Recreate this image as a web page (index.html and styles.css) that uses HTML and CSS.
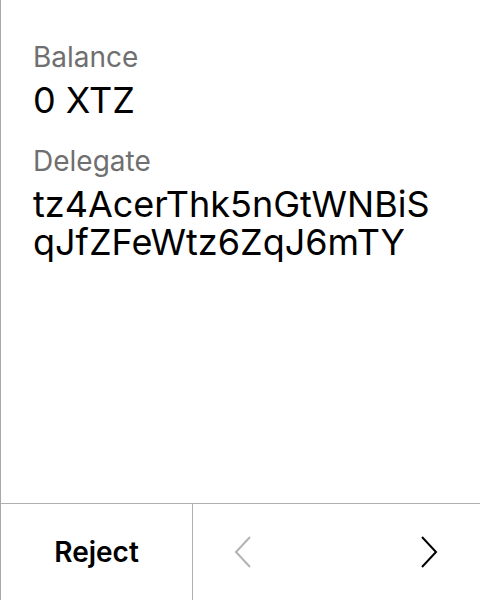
FILE: index.html
```html
<!DOCTYPE html>
<html>
<head>
<meta charset="utf-8">
<link rel="stylesheet" href="styles.css">
</head>
<body>
<div class="screen">
  <div class="content">
    <div class="field">
      <div class="label">Balance</div>
      <div class="value">0 XTZ</div>
    </div>
    <div class="field">
      <div class="label">Delegate</div>
      <div class="value">tz4AcerThk5nGtWNBiSqJfZFeWtz6ZqJ6mTY</div>
    </div>
  </div>
  <div class="footer">
    <div class="reject">Reject</div>
    <div class="nav">
      <svg class="chev" width="18" height="32" viewBox="0 0 18 32"><path d="M16 1 L2 16 L16 31" fill="none" stroke="#b3b3b3" stroke-width="2"/></svg>
      <svg class="chev" width="18" height="32" viewBox="0 0 18 32"><path d="M2 1 L16 16 L2 31" fill="none" stroke="#000" stroke-width="2"/></svg>
    </div>
  </div>
</div>
</body>
</html>
```
FILE: styles.css
```css
html, body {
  margin: 0;
  padding: 0;
  background: #fff;
}
.screen {
  width: 480px;
  height: 600px;
  box-sizing: border-box;
  border-left: 1px solid #a8a8a8;
  display: flex;
  flex-direction: column;
  font-family: Inter, "Noto Sans", sans-serif;
  color: #000;
}
.content {
  flex: 1;
  padding: 39px 32px 0 32px;
  display: flex;
  flex-direction: column;
  gap: 24px;
}
.label {
  font-size: 28px;
  line-height: 36px;
  color: #6f6f6f;
}
.value {
  font-size: 36px;
  line-height: 38px;
  word-break: break-all;
  margin-top: 6px;
}
.footer {
  height: 96px;
  border-top: 1px solid #b0b0b0;
  display: flex;
}
.reject {
  width: 191px;
  border-right: 1px solid #b0b0b0;
  display: flex;
  align-items: center;
  justify-content: center;
  font-size: 28px;
  font-weight: 600;
}
.nav {
  flex: 1;
  display: flex;
  align-items: center;
  justify-content: space-between;
  padding: 0 42px 0 41px;
}
```
